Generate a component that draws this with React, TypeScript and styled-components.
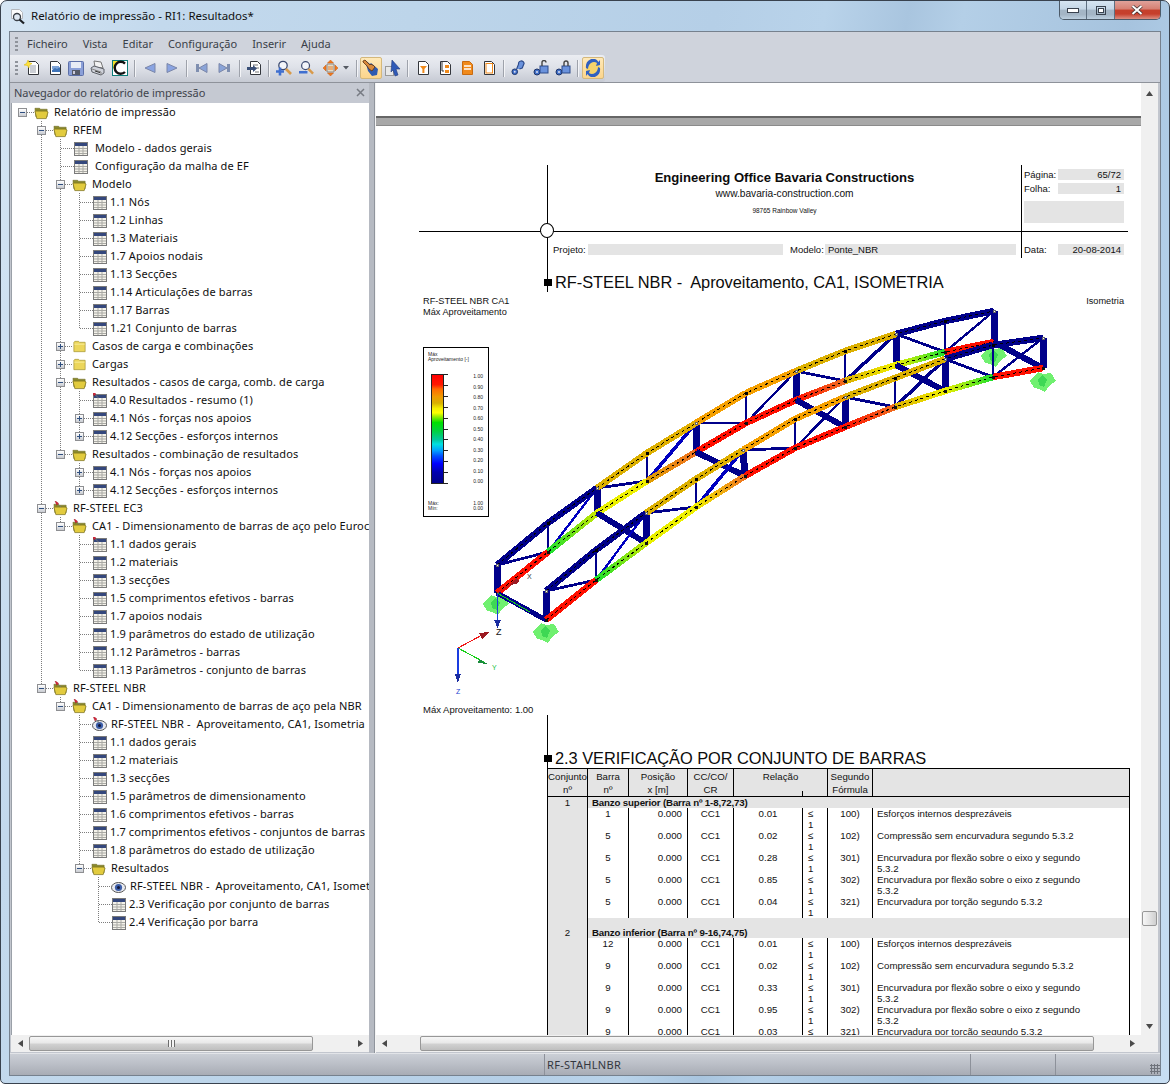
import React from 'react';
import styled, { createGlobalStyle } from 'styled-components';

const Global = createGlobalStyle`
  html, body { margin: 0; padding: 0; background: #fff; overflow: hidden; }
  * { box-sizing: border-box; }
`;

const UI = `"Noto Sans", "DejaVu Sans", sans-serif`;
const DOC = `"Liberation Sans", Arial, sans-serif`;

const Win = styled.div`
  width: 1170px; height: 1084px; display: flex; flex-direction: column;
  border: 1px solid #39424e; border-radius: 7px 7px 5px 5px;
  padding: 0 8px 7px 8px; overflow: hidden;
  background: linear-gradient(101deg, #d6e6f4 0, #c3d9ed 12%, #bdd5ea 30%, #b5cfe7 52%, #b9d3ea 60%, #a9c5df 66%, #b4cfe7 70%, #a6c3de 82%, #bad6ef 92%, #c8def2 100%);
`;
const TitleBar = styled.div`
  height: 30px; flex: none; display: flex; align-items: flex-start;
  font: 11.5px/1 ${UI}; color: #111;
`;
const TitleIcon = styled.span` width: 16px; height: 17px; margin: 7px 5px 0 1px; flex: none; display: block; `;
const TitleText = styled.span` margin-top: 9px; letter-spacing: -0.02px; `;
const Controls = styled.div`
  margin-left: auto; margin-right: 0; display: flex; height: 19px; width: 102px;
  border: 1px solid #4c5a68; border-top: 0; border-radius: 0 0 5px 5px; overflow: hidden;
`;
const Ctl = styled.span<{ $close?: boolean; $w: number }>`
  width: ${p => p.$w}px; display: flex; align-items: center; justify-content: center;
  border-right: 1px solid #5e6f80;
  background: ${p => p.$close
    ? 'linear-gradient(#e0a29a 0, #d67f72 45%, #c5402c 50%, #c63f2c 72%, #dc8f82 100%)'
    : 'linear-gradient(#d6e5f2 0, #c4d6e6 45%, #a4b6c6 50%, #a4b5c5 75%, #bccfdf 100%)'};
  &:last-child { border-right: 0; }
`;
const Inner = styled.div`
  flex: 1; min-height: 0; display: flex; flex-direction: column;
  border: 1px solid #76818e; background: #cfd3dc;
`;
const MenuBar = styled.div`
  height: 23px; flex: none; display: flex; align-items: center; background: #cfd3dc;
  font: 11px/1 ${UI}; color: #3a3f48;
`;
const Grip = styled.span`
  width: 3px; height: 14px; margin-left: 5px; flex: none;
  background: repeating-linear-gradient(#8f939b 0 2px, transparent 2px 4px);
`;
const MenuItem = styled.span<{ $gap: number }>` margin-left: ${p => p.$gap}px; `;
const ToolRow = styled.div` height: 28px; flex: none; display: flex; border-bottom: 1px solid #8e929a; `;
const ToolStrip = styled.div`
  display: flex; align-items: center; width: 595px; flex: none; padding-bottom: 1px;
  background: linear-gradient(#ebedf2 0, #dfe2e9 45%, #c6cad3 100%);
  border-radius: 0 3px 3px 0;
`;
const Tool = styled.span<{ $w: number; $gap: number }>`
  width: ${p => p.$w}px; height: 18px; margin-left: ${p => p.$gap}px; flex: none;
  display: flex; align-items: center; justify-content: center;
`;
const ToolActive = styled(Tool)`
  height: 22px; border: 1px solid #d4b87c; border-radius: 2px;
  background: linear-gradient(#ffe9b8, #fcd58c);
`;
const ToolSep = styled.span<{ $gap: number }>`
  width: 1px; height: 17px; margin-left: ${p => p.$gap}px; flex: none; background: #9ea2ab; box-shadow: 1px 0 0 #f3f4f7;
`;
const Main = styled.div` flex: 1; min-height: 0; display: flex; padding-left: 1px; background: #c2c6ce; `;
const Nav = styled.div` width: 358px; flex: none; display: flex; flex-direction: column; `;
const NavHead = styled.div`
  height: 20px; flex: none; display: flex; align-items: center; justify-content: space-between;
  padding: 0 4px 2px 3px; font: 11px/1 ${UI}; color: #3f444c; background: #c5c9d2;
  letter-spacing: -0.05px;
`;
const TreeBox = styled.div`
  flex: 1; min-height: 0; overflow: hidden; background: #fff; border-left: 1px solid #9aa0a8;
  font: 11px/18px ${UI}; color: #101010; padding-left: 1px;
`;
const Row = styled.div` height: 18px; display: flex; white-space: nowrap; `;
const dotsV = 'repeating-linear-gradient(#7d7d7d 0 1px, transparent 1px 2px)';
const dotsH = 'repeating-linear-gradient(to right, #7d7d7d 0 1px, transparent 1px 2px)';
const Guide = styled.span<{ $on: boolean }>`
  width: 19px; flex: none; height: 18px;
  background: ${p => p.$on ? `${dotsV} 9px 0 / 1px 100% no-repeat` : 'none'};
`;
const Connector = styled.span<{ $w: number; $line: 'none' | 'full' | 'half' }>`
  width: ${p => p.$w}px; flex: none; height: 18px;
  background:
    ${dotsH} 10px 9px / 100% 1px no-repeat
    ${p => p.$line === 'full' ? `, ${dotsV} 9px 0 / 1px 100% no-repeat` : p.$line === 'half' ? `, ${dotsV} 9px 0 / 1px 9px no-repeat` : ''};
`;
const Expander = styled.span<{ $open: boolean }>`
  display: block; width: 9px; height: 9px; margin: 5px 0 0 5px;
  border: 1px solid #8e8f92;
  background:
    linear-gradient(#2f4f7f, #2f4f7f) 1px 3px / 5px 1px no-repeat,
    ${p => p.$open ? '' : 'linear-gradient(#2f4f7f, #2f4f7f) 3px 1px / 1px 5px no-repeat,'}
    linear-gradient(#fff, #c9ccd2);
`;
const NodeIcon = styled.span<{ $w: number }>` width: ${p => p.$w}px; flex: none; height: 18px; display: flex; align-items: center; `;
const NodeText = styled.span<{ $gap: number }>` margin-left: ${p => p.$gap}px; letter-spacing: 0.12px; white-space: pre; `;
const HBar = styled.div`
  height: 17px; flex: none; display: flex; align-items: stretch; background: #f0f0f0; position: relative;
`;
const Arrow = styled.span<{ $w: number }>`
  width: ${p => p.$w}px; flex: none; display: flex; align-items: center; justify-content: center;
`;
const Thumb = styled.span<{ $w: number; $ml?: number }>`
  width: ${p => p.$w}px; flex: none; margin: 1px 0 1px ${p => p.$ml || 0}px;
  border: 1px solid #979797; border-radius: 2px;
  background: linear-gradient(#f6f6f6 0, #e8e8e8 48%, #d2d2d2 52%, #bfbfbf 100%);
  display: flex; align-items: center; justify-content: center;
`;
const ThumbGrip = styled.span`
  width: 7px; height: 7px; background: repeating-linear-gradient(to right, #6d6d6d 0 1px, #f4f4f4 1px 3px);
`;
const Track = styled.span` flex: 1; `;
const Splitter = styled.div` width: 7px; flex: none; background: linear-gradient(to right, #b6bac2 0 5px, #8f949c 5px 6px, #f4f4f4 6px); `;
const DocPane = styled.div` width: 782px; flex: none; display: flex; flex-direction: column; background: #fff; `;
const DocTop = styled.div` flex: 1; min-height: 0; display: flex; `;
const Viewport = styled.div` width: 765px; flex: none; overflow: hidden; `;
const VBar = styled.div` width: 17px; flex: none; background: #f0f0f0; display: flex; flex-direction: column; align-items: center; `;
const VThumb = styled.span`
  width: 15px; height: 15px; margin-top: 808px; border: 1px solid #979797; border-radius: 2px; flex: none;
  background: linear-gradient(to right, #f6f6f6, #e4e4e4 50%, #cfcfcf);
`;
const VArrow = styled.span<{ $h: number }>` height: ${p => p.$h}px; flex: none; display: flex; align-items: center; `;
const VRest = styled.span` flex: 1; `;
const PageGap = styled.div` height: 34px; border-bottom: 2px solid #666; margin-top: 1px; `;
const PageBreak = styled.div` height: 8px; background: #a8a8a8; border-bottom: 1px solid #8b8b8b; `;
const Page = styled.div`
  padding: 39px 0 0 43px; width: 765px; font: 9.5px/11px ${DOC}; color: #111; background: #fff;
`;
const HeadGrid = styled.div<{ $h: number }>`
  display: grid; grid-template-columns: 128px 474px 107px; width: 709px; height: ${p => p.$h}px; position: relative;
`;
const HeadMid = styled.div`
  border-left: 1px solid #000; display: flex; flex-direction: column; align-items: center;
`;
const HeadSide = styled.div` border-left: 1px solid #000; padding: 4px 4px 0 2px; `;
const Company = styled.div` font: bold 13.1px/15px ${DOC}; margin-top: 5px; color: #0c0c0c; `;
const Site = styled.div` font: 10.2px/12px ${DOC}; margin-top: 3px; `;
const Zip = styled.div` font: 6.5px/8px ${DOC}; margin-top: 7px; `;
const FieldRow = styled.div` display: flex; align-items: center; height: 11px; margin-bottom: 3px; `;
const FieldLabel = styled.span<{ $w: number; $ml?: number }>` width: ${p => p.$w}px; margin-left: ${p => p.$ml || 0}px; flex: none; `;
const Field = styled.span<{ $w: number; $right?: boolean }>`
  width: ${p => p.$w}px; height: 11px; flex: none; background: #e4e4e4; padding: 0 3px;
  text-align: ${p => p.$right ? 'right' : 'left'}; line-height: 11px;
`;
const GreyBox = styled.div` height: 22px; width: 100px; margin-top: 7px; background: #e4e4e4; `;
const HRule = styled.div` height: 1px; width: 709px; background: #000; `;
const Circle = styled.span`
  position: absolute; left: 121px; top: 58px; width: 14px; height: 15px; border-radius: 50%;
  border: 1px solid #000; background: #fff; z-index: 1;
`;
const LowerMid = styled.div` border-left: 1px solid #000; display: flex; align-items: flex-start; padding: 12px 0 0 5px; `;
const LowerSide = styled.div` border-left: 1px solid #000; padding: 12px 4px 0 2px; `;
const SectionRow = styled.div<{ $h: number }>`
  margin-left: 128px; height: ${p => p.$h}px; border-left: 1px solid #000; position: relative;
  display: flex; align-items: flex-end;
`;
const Marker = styled.span`
  position: absolute; left: -4px; bottom: 6px; width: 8px; height: 7px; background: #000;
`;
const SectionTitle = styled.div`
  font: 16.4px/20px ${DOC}; padding-left: 7px; color: #0c0c0c; white-space: pre; letter-spacing: -0.05px;
`;
const Labels = styled.div` margin-top: 4px; width: 705px; padding-left: 4px; display: flex; justify-content: space-between; font-size: 9.2px; `;
const Chart = styled.div` position: relative; height: 386px; padding: 29px 0 0 4px; `;
const TrussCanvas = styled.svg`
  position: absolute; left: -43px; top: 0; width: 765px; height: 386px; overflow: visible; shape-rendering: crispEdges;
`;
const Legend = styled.div`
  width: 66px; height: 170px; border: 1px solid #000; background: #fff; position: relative; z-index: 1;
  padding: 4px 5px 0 4px; font: 5px/5px ${DOC}; color: #222; display: flex; flex-direction: column;
`;
const LegendBody = styled.div` display: flex; margin: 12px 0 0 3px; height: 110px; `;
const ColorBar = styled.div`
  width: 13px; height: 110px; flex: none; border: 1px solid #222;
  background: linear-gradient(#ff0000 0, #ff1800 9%, #ff6a00 13%, #f09a00 20%, #d8b000 26%, #f5f000 31%, #ffff00 35%, #a8f000 38%, #00e000 44%, #00d040 52%, #00c8a0 60%, #00e0e0 64%, #00a0ff 70%, #0050ff 75%, #0000ff 82%, #0000b0 90%, #00008a 100%);
`;
const Ticks = styled.div`
  width: 4px; height: 110px; flex: none;
  background: repeating-linear-gradient(#222 0 1px, transparent 1px 10.9px);
`;
const Scale = styled.div` margin-left: auto; display: flex; flex-direction: column; justify-content: space-between; height: 110px; `;
const LegendFoot = styled.div` margin: 17px 0 0 0; display: flex; justify-content: space-between; `;
const Result = styled.div` padding-left: 4px; font-size: 9.5px; `;
const Table = styled.table`
  margin-left: 128px; width: 582px; border-collapse: collapse; table-layout: fixed;
  font: 9.7px/11px ${DOC}; color: #111;
`;
const Th = styled.th`
  background: #e4e4e4; font-weight: 400; padding: 1px 0 0; line-height: 13px; height: 28px;
  border: 1px solid #000; vertical-align: top; position: relative;
`;
const Tick = styled.span` position: absolute; left: 68px; bottom: 0; width: 1px; height: 5px; background: #000; `;
const NumCell = styled.td`
  background: #e4e4e4; text-align: center; vertical-align: bottom; padding: 0; border-left: 1px solid #000; border-right: 1px solid #000; line-height: 11px;
`;
const BandCell = styled.td<{ $h: number }>`
  background: #e4e4e4; height: ${p => p.$h}px; vertical-align: bottom; padding: 0 0 0 4px; border-right: 1px solid #000; white-space: nowrap; font-weight: bold; letter-spacing: -0.15px;
`;
const Td = styled.td<{ $align?: string; $pad?: string }>`
  height: 22px; padding: ${p => p.$pad || '0'}; text-align: ${p => p.$align || 'center'};
  vertical-align: top; border-right: 1px solid #000; overflow: hidden;
`;
const Status = styled.div`
  height: 22px; flex: none; display: flex; align-items: stretch; position: relative;
  background: linear-gradient(#cbcfd6 0, #bcc0c8 45%, #a8acb5 100%); border-top: 1px solid #e2e4e8;
  font: 11px/21px ${UI}; color: #33373e;
`;
const StatusCell = styled.span<{ $w: number; $sep?: boolean }>`
  width: ${p => p.$w}px; flex: none; padding-left: 2px; border-right: ${p => p.$sep ? '1px solid #8d919a' : '0'};
  letter-spacing: 0.3px;
`;
const Resize = styled.span`
  margin-left: auto; width: 10px; align-self: flex-end; height: 10px; margin-bottom: 1px;
  background: radial-gradient(circle, #6f737b 0 1px, transparent 1.1px) 0 0 / 3px 3px;
`;
const FootSpacer = styled.div` height: 1px; flex: none; background: #c2c6ce; `;

/* ---------- icons ---------- */
const Svg: React.FC<{ w?: number; h?: number; children: React.ReactNode }> = ({ w = 16, h = 16, children }) => (
  <svg width={w} height={h} viewBox={`0 0 ${w} ${h}`} style={{ display: 'block' }}>{children}</svg>
);
const Page0 = ({ x = 3, w = 11 }: { x?: number; w?: number }) => (
  <path d={`M${x + .5} 1.5h${w - 4}l3 3v10h-${w - 1}z`} fill="#fff" stroke="#33363c" />
);
const NewDoc = () => <Svg><Page0 x={4} /><path d="M6 6h6M6 8h6M6 10h6M6 12h6" stroke="#9aa0ac" /><path d="M4 0l1.2 2.6L8 3.6 5.4 5 5 8 3.4 5.4 0 5l2.6-1.6z" fill="#ffe23c" stroke="#d8b400" strokeWidth=".5" /></Svg>;
const OpenDoc = () => <Svg w={15}><Page0 x={2} /><path d="M4 6h7v3h-7z" fill="#7ea4d8" /><path d="M4 10l3-2 2 1 3-2v5H4z" fill="#3f74b8" /></Svg>;
const Save = () => <Svg><rect x=".5" y="1.5" width="15" height="14" rx="1" fill="#8a9fd8" stroke="#5c6fa8" /><rect x="3" y="2" width="10" height="6" fill="#e8ecf6" /><rect x="4" y="10" width="8" height="5" fill="#555a68" /><rect x="5" y="11" width="2" height="3" fill="#ccd" /></Svg>;
const Printer = () => <Svg><path d="M4 1l7 1 2 6-8-1z" fill="#f2f2f2" stroke="#777" /><path d="M1 8l3-2 10 3v4l-3 2-9-3z" fill="#cfd2da" stroke="#5c6068" /><path d="M2 9l9 3v3" fill="none" stroke="#888" /><path d="M5 11l5 1.6" stroke="#333" /></Svg>;
const Logo = () => <Svg><rect x=".5" y=".5" width="15" height="15" fill="#fff" stroke="#0c7c78" /><path d="M1 1h6L1 9z" fill="#f2e22c" /><path d="M13 3.6A6 6 0 1 0 13 12" fill="none" stroke="#111" strokeWidth="2.4" /></Svg>;
const TriL = () => <Svg w={12} h={12}><path d="M1 6l10-4.5v9z" fill="#8aa4e2" stroke="#7a86a8" /></Svg>;
const TriR = () => <Svg w={12} h={12}><path d="M11 6L1 1.5v9z" fill="#8aa4e2" stroke="#7a86a8" /></Svg>;
const First = () => <Svg w={12} h={12}><rect x="0" y="2" width="3" height="8" fill="#7f8fb0" /><path d="M3 6l8-4.5v9z" fill="#8aa4d8" stroke="#7a86a8" /></Svg>;
const Last = () => <Svg w={12} h={12}><rect x="9" y="2" width="3" height="8" fill="#7f8fb0" /><path d="M9 6L1 1.5v9z" fill="#8aa4d8" stroke="#7a86a8" /></Svg>;
const ExportDoc = () => <Svg w={15}><path d="M3.5 1.5h7l3 3v10h-10z" fill="#fff" stroke="#33363c" /><path d="M6 5h5M8 8h4M8 12h4" stroke="#777" /><path d="M0 7h6V5l4 3.5L6 12v-2H0z" fill="#3a4f78" /></Svg>;
const Mag = ({ extra }: { extra: React.ReactNode }) => <Svg><circle cx="7" cy="5.5" r="4.2" fill="#f3f5fa" stroke="#3c4a70" strokeWidth="1.3" /><path d="M10 9l5 5" stroke="#d89a4a" strokeWidth="2.6" />{extra}</Svg>;
const ZoomIn = () => <Mag extra={<path d="M0 11.5h8M4 7.5v8" stroke="#3f6fd0" strokeWidth="2.6" />} />;
const ZoomOut = () => <Mag extra={<path d="M0 12.5h9" stroke="#3f6fd0" strokeWidth="2.6" />} />;
const Arrows = () => <Svg w={15}><path d="M4 4h7v8H4z" fill="#e4dcc8" stroke="#8a8a8a" /><path d="M7.5 0l3 3h-6zM7.5 16l3-3h-6zM0 8l3-3v6zM15 8l-3-3v6z" fill="#f07a1c" stroke="#c85a10" strokeWidth=".5" /><path d="M5 7h5M5 9h5" stroke="#e88030" /></Svg>;
const Caret = () => <Svg w={6} h={4}><path d="M0 0h6L3 3.5z" fill="#555a63" /></Svg>;
const Hand = () => <Svg w={18} h={18}><path d="M3 1l5 4 1-1 7 6-1 6-5 1-4-5z" fill="#2e5ab0" /><path d="M1 2l2-1 5 5 1-1 1 1 1 0 2 2-3 4-3-2-2-3-1-1-3-3z" fill="#d98a3c" stroke="#5c3010" strokeWidth=".8" /></Svg>;
const Pointer = () => <Svg w={17} h={18}><rect x=".5" y="7.5" width="8" height="9" fill="#e8e8e8" stroke="#9a9a9a" /><path d="M7 1l8 9-4 0 2 6-3 1-2-6-2 2z" fill="#2f5ab8" stroke="#243a78" strokeWidth=".6" /></Svg>;
const DocBase = ({ children }: { children: React.ReactNode }) => <Svg w={13}><path d="M1.5 1.5h7l3 3v10h-10z" fill="#fff" stroke="#33363c" />{children}</Svg>;
const Doc1 = () => <DocBase><path d="M3 6h7l-2.6 3v4h-2V9z" fill="#f08a1c" /></DocBase>;
const Doc2 = () => <DocBase><path d="M3 2v9h2" fill="none" stroke="#333" /><rect x="6" y="5" width="4" height="3" fill="#f08a1c" /><rect x="6" y="10" width="4" height="3" fill="#f08a1c" /></DocBase>;
const Doc3 = () => <Svg w={13}><path d="M1.5 1.5h7l3 3v10h-10z" fill="#f08a1c" stroke="#c86a10" /><path d="M3 6h7M3 9h7" stroke="#fff" strokeWidth="1.4" /></Svg>;
const Doc4 = () => <Svg w={13}><path d="M1.5 1.5h7l3 3v10h-10z" fill="#fff" stroke="#33363c" /><rect x="3" y="3.5" width="6.5" height="9.5" fill="none" stroke="#f08a1c" /></Svg>;
const Key = ({ v }: { v: number }) => <Svg><circle cx="4" cy="12" r="3" fill="#3f6fc8" stroke="#1e3468" /><circle cx="4" cy="12" r="1" fill="#dde" />{v === 0 ? <path d="M6 9l2-5a3 3 0 0 1 6-1l-2 5-3 1" fill="#6a92dc" stroke="#2c4a8a" strokeWidth="1.2" /> : <><rect x="7" y="6" width="8" height="7" fill="#6a92dc" stroke="#2c4a8a" /><path d={v === 1 ? 'M9 6V2.5a2 2 0 0 1 4 0' : 'M9 6V3a2 2 0 0 1 4 0v3'} fill="none" stroke="#444" strokeWidth="1.4" /></>}</Svg>;
const Sync = () => <Svg w={18} h={18}><ellipse cx="9" cy="9" rx="7" ry="8" fill="#f5d36a" /><path d="M4 10a6 7 0 0 1 9-6l-1 3 4-1 0-5-1.500 2A7 8 0 0 0 2 9z" fill="#3060c0" /><path d="M14 8a6 7 0 0 1-9 6l1-3-4 1 0 5 1.500-2A7 8 0 0 0 16 9z" fill="#3060c0" /></Svg>;
const MiniTriangle = ({ d }: { d: 'u' | 'd' | 'l' | 'r' }) => {
  const p = { u: 'M0 5L3.500 0 7 5z', d: 'M0 0h7L3.500 5z', l: 'M5 0v7L0 3.500z', r: 'M0 0v7L5 3.500z' }[d];
  const w = d === 'u' || d === 'd' ? 7 : 5; const h = d === 'u' || d === 'd' ? 5 : 7;
  return <svg width={w} height={h} viewBox={`0 0 ${w} ${h}`}><path d={p} fill="#4a4a4a" /></svg>;
};
const Pin = () => <g><path d="M1 0l4 3-2 2z" fill="#d8263a" stroke="#8c1020" strokeWidth=".4" /><path d="M4.500 4l3 3" stroke="#777" strokeWidth="1" /></g>;
const TableIcon = ({ pin }: { pin?: boolean }) => (
  <Svg w={14} h={15}>
    <rect x=".5" y="1.500" width="13" height="13" fill="#f4f2ea" stroke="#7a7a7a" />
    <rect x="1" y="2" width="12" height="3" fill="#34477c" />
    <path d="M1 7.500h12M1 10h12M1 12.500h12M5 5v9M9 5v9" stroke="#a9a9a4" />
    {pin && <g transform="translate(-2 -2)"><Pin /></g>}
  </Svg>
);
const FolderOpen = ({ pin }: { pin?: boolean }) => (
  <Svg w={16} h={15}>
    <path d="M1 3h5l1 1h7v8H2z" fill="#8a8a2c" stroke="#6e6a20" strokeWidth=".6" />
    <path d="M1 6h12l2 1-2 7H3z" fill="#e2cb3e" stroke="#7f7420" strokeWidth=".8" />
    {pin && <g transform="translate(1 -1)"><Pin /></g>}
  </Svg>
);
const FolderClosed = () => (
  <Svg w={16} h={15}><path d="M2 3l1-1h4l1 1h6v10H2z" fill="#ecd65a" stroke="#a89a3a" strokeWidth=".8" /><path d="M2.500 5h11" stroke="#f8ee9c" /></Svg>
);
const Eye = ({ pin }: { pin?: boolean }) => (
  <Svg w={16} h={15}>
    <ellipse cx="8.500" cy="8.500" rx="7" ry="5" fill="#e8eaf0" stroke="#555" />
    <circle cx="8.500" cy="8.500" r="3.600" fill="#3c5ea8" />
    <circle cx="8.500" cy="8.500" r="1.500" fill="#11183a" />
    {pin && <g transform="translate(1 -1)"><Pin /></g>}
  </Svg>
);

/* ---------- tree data ---------- */
type K = 'open' | 'closed' | 'table' | 'eye';
type N = { t: string; k: K; pin?: boolean; pad?: number; plus?: boolean; c?: N[] };
const L = (t: string, extra: Partial<N> = {}): N => ({ t, k: 'table', ...extra });
const tree: N = {
  t: 'Relatório de impressão', k: 'open', c: [
    { t: 'RFEM', k: 'open', c: [
      L('Modelo - dados gerais', { pad: 4 }),
      L('Configuração da malha de EF', { pad: 4 }),
      { t: 'Modelo', k: 'open', c: ['1.1 Nós', '1.2 Linhas', '1.3 Materiais', '1.7 Apoios nodais', '1.13 Secções', '1.14 Articulações de barras', '1.17 Barras', '1.21 Conjunto de barras'].map(s => L(s)) },
      { t: 'Casos de carga e combinações', k: 'closed', plus: true },
      { t: 'Cargas', k: 'closed', plus: true },
      { t: 'Resultados - casos de carga, comb. de carga', k: 'open', c: [
        L('4.0 Resultados - resumo (1)', { pin: true }),
        L('4.1 Nós - forças nos apoios', { plus: true }),
        L('4.12 Secções - esforços internos', { plus: true }),
      ] },
      { t: 'Resultados - combinação de resultados', k: 'open', c: [
        L('4.1 Nós - forças nos apoios', { plus: true }),
        L('4.12 Secções - esforços internos', { plus: true }),
      ] },
    ] },
    { t: 'RF-STEEL EC3', k: 'open', pin: true, c: [
      { t: 'CA1 - Dimensionamento de barras de aço pelo Eurocódigo 3', k: 'open', pin: true, c: [
        L('1.1 dados gerais', { pin: true }),
        ...['1.2 materiais', '1.3 secções', '1.5 comprimentos efetivos - barras', '1.7 apoios nodais', '1.9 parâmetros do estado de utilização', '1.12 Parâmetros - barras', '1.13 Parâmetros - conjunto de barras'].map(s => L(s)),
      ] },
    ] },
    { t: 'RF-STEEL NBR', k: 'open', pin: true, c: [
      { t: 'CA1 - Dimensionamento de barras de aço pela NBR', k: 'open', pin: true, c: [
        { t: 'RF-STEEL NBR -  Aproveitamento, CA1, Isometria', k: 'eye', pin: true },
        ...['1.1 dados gerais', '1.2 materiais', '1.3 secções', '1.5 parâmetros de dimensionamento', '1.6 comprimentos efetivos - barras', '1.7 comprimentos efetivos - conjuntos de barras', '1.8 parâmetros do estado de utilização'].map(s => L(s)),
        { t: 'Resultados', k: 'open', c: [
          { t: 'RF-STEEL NBR -  Aproveitamento, CA1, Isometria', k: 'eye' },
          L('2.3 Verificação por conjunto de barras'),
          L('2.4 Verificação por barra'),
        ] },
      ] },
    ] },
  ],
};

const flatten = (n: N, anc: boolean[], last: boolean, out: React.ReactNode[]) => {
  const hasKids = !!n.c;
  const folder = n.k === 'open' || n.k === 'closed';
  const eye = n.k === 'eye';
  out.push(
    <Row key={out.length}>
      {anc.map((a, i) => <Guide key={i} $on={a} />)}
      <Connector $w={folder || eye ? 21 : 23} $line={last ? 'half' : 'full'}>
        {(hasKids || n.plus) && <Expander $open={hasKids} />}
      </Connector>
      <NodeIcon $w={folder ? 15 : eye ? 16 : 14}>
        {n.k === 'open' && <FolderOpen pin={n.pin} />}
        {n.k === 'closed' && <FolderClosed />}
        {n.k === 'table' && <TableIcon pin={n.pin} />}
        {n.k === 'eye' && <Eye pin={n.pin} />}
      </NodeIcon>
      <NodeText $gap={(folder ? 5 : eye ? 4 : 3) + (n.pad || 0)}>{n.t}</NodeText>
    </Row>
  );
  (n.c || []).forEach((c, i, arr) => flatten(c, [...anc, !last], i === arr.length - 1, out));
};

const treeRows = (() => {
  const out: React.ReactNode[] = [
    <Row key="root">
      <Connector $w={21} $line="none"><Expander $open /></Connector>
      <NodeIcon $w={15}><FolderOpen /></NodeIcon>
      <NodeText $gap={5}>{tree.t}</NodeText>
    </Row>,
  ];
  const kids = tree.c || [];
  kids.forEach((k, i) => flatten(k, [false], i === kids.length - 1, out));
  return out.map((r, i) => <React.Fragment key={i}>{r}</React.Fragment>);
})();

/* ---------- truss (screen coordinates) ---------- */
type P = [number, number];
const A: P[] = [[497, 565], [548, 523], [597, 488], [647, 453], [696, 423], [746, 393], [796, 371], [845, 351], [896, 334], [945, 321], [994, 311]];
const B: P[] = [[497, 593], [548, 552], [597, 513], [647, 481], [696, 452], [746, 423], [796, 400], [845, 381], [896, 365], [945, 352], [994, 342]];
const C: P[] = [[546, 591], [596, 550], [646, 513], [696, 479], [743, 450], [795, 419], [845, 397], [895, 378], [945, 359], [993, 345], [1043, 338]];
const D: P[] = [[546, 620], [596, 580], [646, 543], [696, 507], [745, 476], [795, 448], [845, 427], [895, 407], [945, 391], [993, 377], [1043, 368]];
const N1 = '#00008a', R = '#ff0f00', O = '#f5a000', G = '#dcb000', Y = '#f0f000', LG = '#19e030', OR = '#f07020';
const topCols: [string, string][] = [[N1, N1], [N1, N1], [G, G], [G, '#e4b000'], [O, O], [O, O], [G, G], [G, G], [N1, N1], [N1, N1]];
const botCols: [string, string][] = [[R, R], [LG, '#c8e800'], ['#e8f000', Y], ['#e0a000', OR], [R, R], [R, R], [R, OR], [G, Y], [Y, LG], [R, R]];
const botColsFront: [string, string][] = [[R, R], [LG, '#c8e800'], ['#e8f000', Y], [Y, OR], [R, R], [R, R], [R, OR], [G, Y], [Y, LG], [R, R]];

const Chord: React.FC<{ pts: P[]; cols: [string, string][]; id: string; w?: number }> = ({ pts, cols, id, w = 6.5 }) => (
  <g>
    {cols.map((c, i) => {
      const [p, q] = [pts[i], pts[i + 1]];
      const gid = `${id}${i}`;
      return (
        <g key={i}>
          <linearGradient id={gid} gradientUnits="userSpaceOnUse" x1={p[0]} y1={p[1]} x2={q[0]} y2={q[1]}>
            <stop offset="0" stopColor={c[0]} /><stop offset="1" stopColor={c[1]} />
          </linearGradient>
          <line x1={p[0]} y1={p[1]} x2={q[0]} y2={q[1]} stroke={`url(#${gid})`} strokeWidth={w} />
        </g>
      );
    })}
    <polyline points={pts.map(p => p.join(',')).join(' ')} fill="none" stroke="#000" strokeWidth="1" strokeDasharray="3 3" />
  </g>
);
const Seg: React.FC<{ p: P; q: P; w: number; c?: string }> = ({ p, q, w, c = N1 }) => (
  <line x1={p[0]} y1={p[1]} x2={q[0]} y2={q[1]} stroke={c} strokeWidth={w} />
);
const Girder: React.FC<{ T: P[]; Bt: P[]; bot: [string, string][]; id: string }> = ({ T, Bt, bot, id }) => (
  <g>
    {T.map((p, i) => <Seg key={i} p={p} q={Bt[i]} w={i % 2 === 0 ? 7 : 2.500} />)}
    {T.map((p, i) => i % 2 === 0 && i < 10 ? <Seg key={`s${i}`} p={p} q={Bt[i + 1]} w={2.800} /> : null)}
    {T.map((p, i) => i % 2 === 0 && i > 0 ? <Seg key={`d${i}`} p={Bt[i - 1]} q={p} w={i % 4 === 2 ? 2.400 : 3.500} c={i === 2 || i === 4 ? '#0000c0' : N1} /> : null)}
    <Chord pts={Bt} cols={bot} id={`${id}b`} />
    <Chord pts={T} cols={topCols} id={`${id}t`} />
    {T.map((p, i) => <rect key={`n${i}`} x={p[0] - 1} y={p[1] - 1} width="2.500" height="2.500" fill={i % 2 ? '#000' : '#fff'} stroke="#000" strokeWidth=".6" />)}
    {Bt.map((p, i) => <rect key={`m${i}`} x={p[0] - 1} y={p[1] - 1} width="2.500" height="2.500" fill="#111" />)}
  </g>
);
const Support: React.FC<{ x: number; y: number }> = ({ x, y }) => (
  <g transform={`translate(${x} ${y})`}>
    <path d="M-12 6l8-9 5 2 8-1 5 8-7 5-4 6-6-3-5-1z" fill="#70f070" />
    <path d="M-4 4l5-4 4 5-3 7-5-2z" fill="#3ed854" />
  </g>
);
const Truss = () => (
  <TrussCanvas viewBox="376 318 765 386">
    <Support x={495} y={598} />
    <Support x={545} y={626} />
    <Support x={993} y={350} />
    <Support x={1042} y={375} />
    <Girder T={A} Bt={B} bot={botCols} id="a" />
    {[0, 2, 4, 6, 8, 10].map(i => <Seg key={i} p={B[i]} q={D[i]} w={i === 0 ? 5 : 6} />)}
    <Seg p={[497, 593]} q={[530, 612]} w={1} c="#18d018" />
    <Girder T={C} Bt={D} bot={botColsFront} id="c" />
    <path d="M497 593L517 581" stroke="#c81a1a" strokeWidth="1.200" />
    <path d="M516 578l-7 7 7-1 3-3z" fill="#9c1a22" />
    <text x="527" y="579" fontFamily={DOC} fontSize="7" fill="#333">X</text>
    <line x1="497.500" y1="593" x2="497.500" y2="622" stroke="#1a3ce0" strokeWidth="1.500" />
    <path d="M494 620h7l-3.500 8z" fill="#1a2ca0" />
    <text x="496" y="635" fontFamily={DOC} fontSize="9" fill="#111">Z</text>
    <line x1="458" y1="648" x2="484" y2="634" stroke="#f01818" strokeWidth="1.100" />
    <path d="M489 632l-10 1 3 6z" fill="#9c1a22" />
    <line x1="458" y1="648" x2="484" y2="662" stroke="#18d018" strokeWidth="1.100" />
    <path d="M488 664l-9-5-1 4z" fill="#1a8c3c" />
    <text x="492" y="670" fontFamily={DOC} fontSize="7" fill="#20c040">Y</text>
    <line x1="458" y1="648" x2="458" y2="676" stroke="#1a3ce0" strokeWidth="1.600" />
    <path d="M455 674h6l-3 9z" fill="#1a2ca0" />
    <text x="456" y="694" fontFamily={DOC} fontSize="7" fill="#2040d0">Z</text>
  </TrussCanvas>
);

/* ---------- table ---------- */
type Rw = [string, string, string, string];
const D1 = 'Esforços internos desprezáveis';
const D2 = 'Compressão sem encurvadura segundo 5.3.2';
const D3 = 'Encurvadura por flexão sobre o eixo y segundo 5.3.2';
const D4 = 'Encurvadura por flexão sobre o eixo z segundo 5.3.2';
const D5 = 'Encurvadura por torção segundo 5.3.2';
const rows1: Rw[] = [['1', '0.01', '100)', D1], ['5', '0.02', '102)', D2], ['5', '0.28', '301)', D3], ['5', '0.85', '302)', D4], ['5', '0.04', '321)', D5]];
const rows2: Rw[] = [['12', '0.01', '100)', D1], ['9', '0.02', '102)', D2], ['9', '0.33', '301)', D3], ['9', '0.95', '302)', D4], ['9', '0.03', '321)', D5]];
const DataCells: React.FC<{ r: Rw }> = ({ r }) => (
  <>
    <Td>{r[0]}</Td>
    <Td $align="right" $pad="0 5px 0 0">0.000</Td>
    <Td>CC1</Td>
    <Td>{r[1]}</Td>
    <Td $align="left" $pad="0 0 0 5px">≤<br />1</Td>
    <Td>{r[2]}</Td>
    <Td $align="left" $pad="0 40px 0 4px">{r[3]}</Td>
  </>
);
const Group: React.FC<{ n: string; title: string; h: number; rows: Rw[] }> = ({ n, title, h, rows }) => (
  <>
    <tr>
      <NumCell>{n}</NumCell>
      <BandCell colSpan={7} $h={h}>{title}</BandCell>
    </tr>
    {rows.map((r, i) => (
      <tr key={i}>
        {i === 0 && <NumCell rowSpan={rows.length} />}
        <DataCells r={r} />
      </tr>
    ))}
  </>
);

const tools: { el: React.ReactNode; w: number; gap: number; on?: boolean; sep?: boolean }[] = [
  { el: <NewDoc />, w: 16, gap: 6 }, { el: <OpenDoc />, w: 15, gap: 8 }, { el: <Save />, w: 16, gap: 5 },
  { el: <Printer />, w: 16, gap: 6 }, { el: <Logo />, w: 16, gap: 6 }, { el: null, w: 1, gap: 6, sep: true },
  { el: <TriL />, w: 12, gap: 9 }, { el: <TriR />, w: 12, gap: 10 }, { el: null, w: 1, gap: 8, sep: true },
  { el: <First />, w: 12, gap: 9 }, { el: <Last />, w: 12, gap: 10 }, { el: null, w: 1, gap: 9, sep: true },
  { el: <ExportDoc />, w: 15, gap: 7 }, { el: null, w: 1, gap: 6, sep: true },
  { el: <ZoomIn />, w: 16, gap: 7 }, { el: <ZoomOut />, w: 15, gap: 7 }, { el: <Arrows />, w: 15, gap: 9 },
  { el: <Caret />, w: 6, gap: 5 }, { el: null, w: 1, gap: 7, sep: true },
  { el: <Hand />, w: 22, gap: 3, on: true }, { el: <Pointer />, w: 17, gap: 3 }, { el: null, w: 1, gap: 5, sep: true },
  { el: <Doc1 />, w: 13, gap: 9 }, { el: <Doc2 />, w: 13, gap: 9 }, { el: <Doc3 />, w: 13, gap: 9 }, { el: <Doc4 />, w: 13, gap: 9 },
  { el: null, w: 1, gap: 7, sep: true },
  { el: <Key v={0} />, w: 15, gap: 7 }, { el: <Key v={1} />, w: 16, gap: 7 }, { el: <Key v={2} />, w: 16, gap: 6 },
  { el: null, w: 1, gap: 6, sep: true }, { el: <Sync />, w: 22, gap: 4, on: true },
];
const menu: [string, number][] = [['Ficheiro', 9], ['Vista', 15], ['Editar', 15], ['Configuração', 15], ['Inserir', 15], ['Ajuda', 15]];
const scale = ['1.00', '0.90', '0.80', '0.70', '0.60', '0.50', '0.40', '0.30', '0.20', '0.10', '0.00'];

export default function App() {
  return (
    <Win>
      <Global />
      <TitleBar>
        <TitleIcon>
          <Svg w={16} h={17}>
            <path d="M1.500 1.500h8l3 3v6h-11z" fill="#fbfbfb" stroke="#b5b8bd" />
            <circle cx="7" cy="9" r="3.500" fill="#dfe8f2" stroke="#3a3f46" strokeWidth="1.300" />
            <path d="M9.500 11.500l4.500 4" stroke="#1d2025" strokeWidth="2.200" />
          </Svg>
        </TitleIcon>
        <TitleText>Relatório de impressão - RI1: Resultados*</TitleText>
        <Controls>
          <Ctl $w={28}><svg width="12" height="5"><rect x=".5" y=".5" width="11" height="4" fill="#fff" stroke="#39424e" /></svg></Ctl>
          <Ctl $w={28}><svg width="10" height="9"><rect x=".5" y=".5" width="9" height="8" fill="none" stroke="#39424e" /><rect x="2.500" y="2.500" width="5" height="4" fill="#fff" stroke="#39424e" /></svg></Ctl>
          <Ctl $close $w={46}><svg width="12" height="10"><path d="M1.500 1L10.500 9M10.500 1L1.500 9" stroke="#3c3232" strokeWidth="3.400" /><path d="M1.500 1L10.500 9M10.500 1L1.500 9" stroke="#fff" strokeWidth="2" /></svg></Ctl>
        </Controls>
      </TitleBar>
      <Inner>
        <MenuBar>
          <Grip />
          {menu.map(([m, g]) => <MenuItem key={m} $gap={g}>{m}</MenuItem>)}
        </MenuBar>
        <ToolRow>
          <ToolStrip>
            <Grip />
            {tools.map((t, i) => t.sep
              ? <ToolSep key={i} $gap={t.gap} />
              : t.on
                ? <ToolActive key={i} $w={t.w} $gap={t.gap}>{t.el}</ToolActive>
                : <Tool key={i} $w={t.w} $gap={t.gap}>{t.el}</Tool>)}
          </ToolStrip>
        </ToolRow>
        <Main>
          <Nav>
            <NavHead>
              <span>Navegador do relatório de impressão</span>
              <svg width="9" height="9"><path d="M1 1l7 7M8 1L1 8" stroke="#777b83" strokeWidth="1.500" /></svg>
            </NavHead>
            <TreeBox>{treeRows}</TreeBox>
            <HBar>
              <Arrow $w={18}><MiniTriangle d="l" /></Arrow>
              <Thumb $w={284}><ThumbGrip /></Thumb>
              <Track />
              <Arrow $w={17}><MiniTriangle d="r" /></Arrow>
            </HBar>
            <FootSpacer />
          </Nav>
          <Splitter />
          <DocPane>
            <DocTop>
              <Viewport>
                <PageGap />
                <PageBreak />
                <Page>
                  <HeadGrid $h={66}>
                    <span />
                    <HeadMid>
                      <Company>Engineering Office Bavaria Constructions</Company>
                      <Site>www.bavaria-construction.com</Site>
                      <Zip>98765 Rainbow Valley</Zip>
                    </HeadMid>
                    <HeadSide>
                      <FieldRow><FieldLabel $w={34}>Página:</FieldLabel><Field $w={66} $right>65/72</Field></FieldRow>
                      <FieldRow><FieldLabel $w={34}>Folha:</FieldLabel><Field $w={66} $right>1</Field></FieldRow>
                      <GreyBox />
                    </HeadSide>
                    <Circle />
                  </HeadGrid>
                  <HRule />
                  <HeadGrid $h={25}>
                    <span />
                    <LowerMid>
                      <FieldLabel $w={35}>Projeto:</FieldLabel>
                      <Field $w={195} />
                      <FieldLabel $w={35} $ml={7}>Modelo:</FieldLabel>
                      <Field $w={191}>Ponte_NBR</Field>
                    </LowerMid>
                    <LowerSide>
                      <FieldRow><FieldLabel $w={34}>Data:</FieldLabel><Field $w={66} $right>20-08-2014</Field></FieldRow>
                    </LowerSide>
                  </HeadGrid>
                  <SectionRow $h={35}>
                    <Marker />
                    <SectionTitle>RF-STEEL NBR -  Aproveitamento, CA1, ISOMETRIA</SectionTitle>
                  </SectionRow>
                  <Labels>
                    <span>RF-STEEL NBR CA1<br />Máx Aproveitamento</span>
                    <span>Isometria</span>
                  </Labels>
                  <Chart>
                    <Truss />
                    <Legend>
                      <div>Máx<br />Aproveitamento [-]</div>
                      <LegendBody>
                        <ColorBar />
                        <Ticks />
                        <Scale>{scale.map(s => <span key={s}>{s}</span>)}</Scale>
                      </LegendBody>
                      <LegendFoot><span>Máx:<br />Mín:</span><span>1.00<br />0.00</span></LegendFoot>
                    </Legend>
                  </Chart>
                  <Result>Máx Aproveitamento: 1.00</Result>
                  <SectionRow $h={53}>
                    <Marker />
                    <SectionTitle>2.3 VERIFICAÇÃO POR CONJUNTO DE BARRAS</SectionTitle>
                  </SectionRow>
                  <Table>
                    <colgroup>
                      <col width="40" /><col width="41" /><col width="59" /><col width="46" /><col width="69" /><col width="25" /><col width="45" /><col width="257" />
                    </colgroup>
                    <thead>
                      <tr>
                        <Th>Conjunto<br />nº</Th>
                        <Th>Barra<br />nº</Th>
                        <Th>Posição<br />x [m]</Th>
                        <Th>CC/CO/<br />CR</Th>
                        <Th colSpan={2}>Relação<Tick /></Th>
                        <Th>Segundo<br />Fórmula</Th>
                        <Th />
                      </tr>
                    </thead>
                    <tbody>
                      <Group n="1" title="Banzo superior (Barra nº 1-8,72,73)" h={11} rows={rows1} />
                      <Group n="2" title="Banzo inferior (Barra nº 9-16,74,75)" h={20} rows={rows2} />
                    </tbody>
                  </Table>
                </Page>
              </Viewport>
              <VBar>
                <VArrow $h={20}><MiniTriangle d="u" /></VArrow>
                <VThumb />
                <VRest />
                <VArrow $h={17}><MiniTriangle d="d" /></VArrow>
              </VBar>
            </DocTop>
            <HBar>
              <Arrow $w={16}><MiniTriangle d="l" /></Arrow>
              <Thumb $w={674} $ml={28} />
              <Track />
              <Arrow $w={52}><MiniTriangle d="r" /></Arrow>
            </HBar>
            <FootSpacer />
          </DocPane>
        </Main>
        <Status>
          <StatusCell $w={535} $sep />
          <StatusCell $w={426} $sep>RF-STAHLNBR</StatusCell>
          <StatusCell $w={85} $sep />
          <Resize />
        </Status>
      </Inner>
    </Win>
  );
}
